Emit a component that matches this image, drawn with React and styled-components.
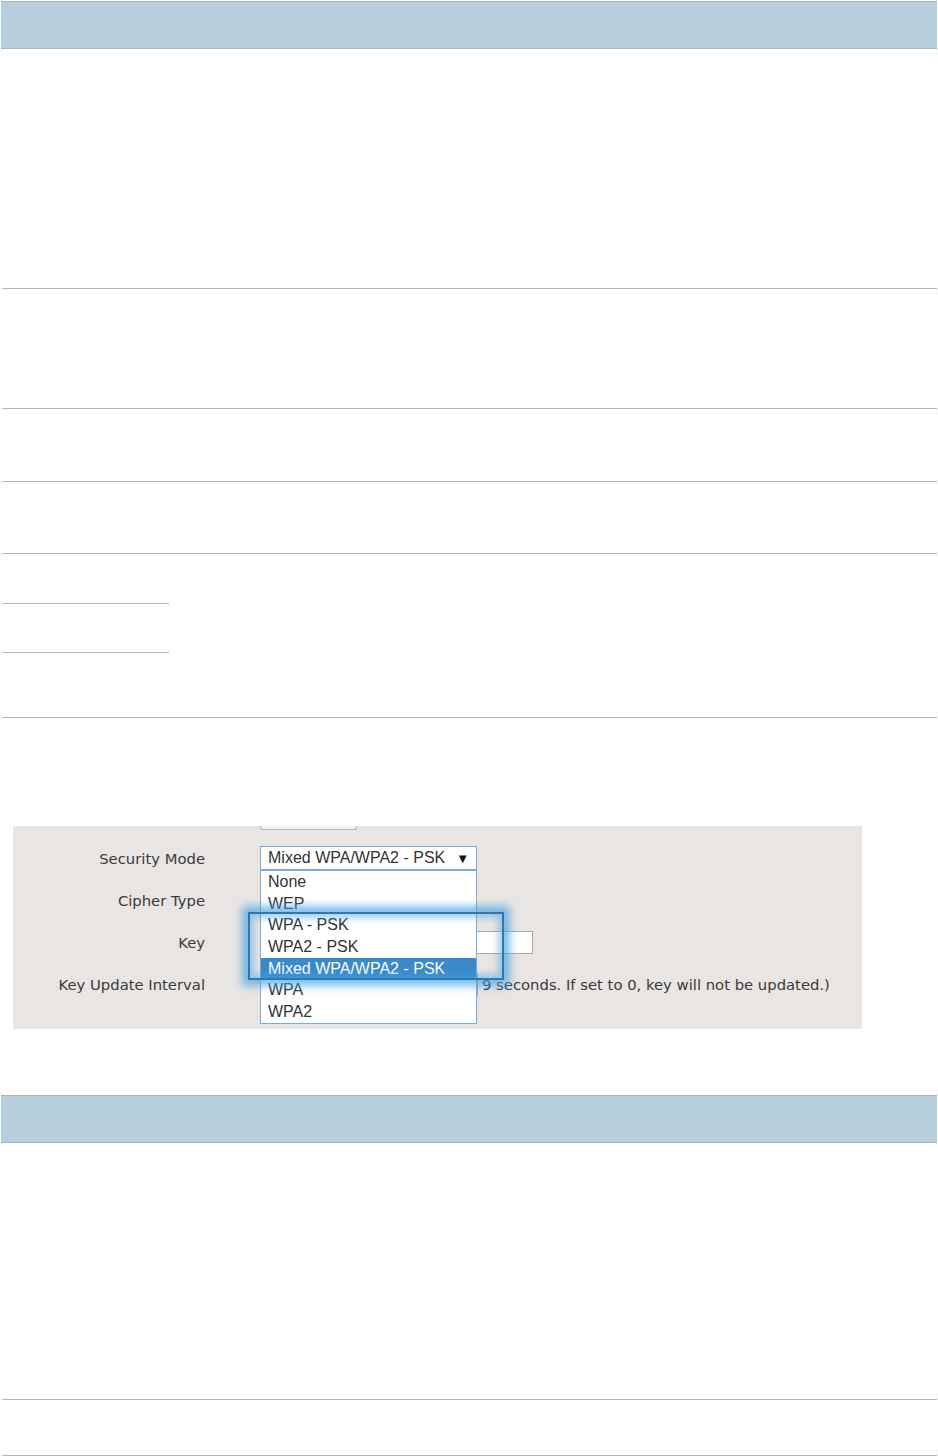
import React from "react";
import styled, { createGlobalStyle } from "styled-components";

const GlobalStyle = createGlobalStyle`
  html, body {
    margin: 0;
    padding: 0;
    background: #ffffff;
  }
  body {
    font-family: "Liberation Sans", Arial, sans-serif;
  }
`;

const Page = styled.div`
  width: 938px;
  padding-top: 1px;
  display: flex;
  flex-direction: column;
`;

const Table = styled.div`
  display: flex;
  flex-direction: column;
  padding: 0 1px 0 2px;
  margin-top: ${(p) => p.$top || 0}px;
`;

const HeaderBand = styled.div`
  height: 48px;
  box-sizing: border-box;
  margin-left: -1px;
  background: #b7cedd;
  border-top: 1px solid #acb3b8;
  border-bottom: 1px solid #acb3b8;
`;

const Row = styled.div`
  display: grid;
  grid-template-columns: 167px 1fr;
  height: ${(p) => p.$h}px;
  box-sizing: border-box;
  border-bottom: 1px solid #b4b4b4;
`;

const SubStack = styled.div`
  display: flex;
  flex-direction: column;
`;

const SubCell = styled.div`
  height: ${(p) => p.$h}px;
  box-sizing: border-box;
  border-bottom: ${(p) => (p.$line ? "1px solid #b4b4b4" : "none")};
`;

const Cell = styled.div``;

/* ---- embedded router screenshot ---- */

const Figure = styled.div`
  margin: 108px 0 0 13px;
  width: 849px;
  height: 203px;
  background: #e9e5e3;
  position: relative;
  font-family: "DejaVu Sans", Tahoma, Verdana, sans-serif;
  font-size: 14.8px;
  color: #3b3a3a;
`;

const Stub = styled.div`
  margin-left: 247px;
  width: 95px;
  height: 3px;
  border: 1px solid #b9b6b6;
  border-top: none;
  border-radius: 0 0 3px 3px;
  background: #f4f2f1;
  margin-bottom: 7px;
`;

const Form = styled.div`
  display: grid;
  grid-template-columns: 192px 1fr;
  column-gap: 55px;
  grid-auto-rows: 42px;
  align-items: center;
`;

const Label = styled.div`
  text-align: right;
  white-space: nowrap;
`;

const Control = styled.div`
  display: flex;
  align-items: center;
  position: relative;
`;

const Select = styled.div`
  position: relative;
  width: 217px;
  height: 24px;
  box-sizing: border-box;
  border: 1px solid #7fa9cf;
  background: #ffffff;
  display: flex;
  align-items: center;
  justify-content: space-between;
  padding: 0 7px 0 7px;
  font-family: "Liberation Sans", Arial, sans-serif;
  font-size: 16px;
  color: #333;
`;

const Arrow = styled.span`
  font-size: 13px;
  color: #111;
`;

const List = styled.div`
  position: absolute;
  top: 23px;
  left: -1px;
  width: 217px;
  box-sizing: border-box;
  border: 1px solid #7fa9cf;
  background: #ffffff;
  z-index: 2;
`;

const Option = styled.div`
  height: 21.7px;
  line-height: 21.7px;
  padding-left: 7px;
  font-family: "Liberation Sans", Arial, sans-serif;
  font-size: 16px;
  color: ${(p) => (p.$active ? "#ffffff" : "#333")};
  background: ${(p) => (p.$active ? "#3a8ac8" : "transparent")};
`;

const Input = styled.div`
  width: ${(p) => p.$w}px;
  height: 23px;
  box-sizing: border-box;
  border: 1px solid #a9a7a7;
  background: #ffffff;
  flex: none;
`;

const Hint = styled.span`
  margin-left: 4px;
  white-space: nowrap;
`;

const Highlight = styled.div`
  position: absolute;
  left: 235px;
  top: 86px;
  width: 256px;
  height: 68px;
  box-sizing: border-box;
  border: 2px solid #2b78b6;
  box-shadow: 0 0 8px 6px rgba(70, 162, 226, 0.7),
    inset 0 0 7px 4px rgba(70, 162, 226, 0.5);
  z-index: 3;
  pointer-events: none;
`;

const options = [
  "None",
  "WEP",
  "WPA - PSK",
  "WPA2 - PSK",
  "Mixed WPA/WPA2 - PSK",
  "WPA",
  "WPA2",
];

export default function App() {
  return (
    <Page>
      <GlobalStyle />
      <Table>
        <HeaderBand />
        <Row $h={240}>
          <Cell />
          <Cell />
        </Row>
        <Row $h={120}>
          <Cell />
          <Cell />
        </Row>
        <Row $h={73}>
          <Cell />
          <Cell />
        </Row>
        <Row $h={72}>
          <Cell />
          <Cell />
        </Row>
        <Row $h={164}>
          <SubStack>
            <SubCell $h={50} $line />
            <SubCell $h={49} $line />
            <SubCell $h={64} />
          </SubStack>
          <Cell />
        </Row>
      </Table>

      <Figure>
        <Stub />
        <Form>
          <Label>Security Mode</Label>
          <Control>
            <Select>
              Mixed WPA/WPA2 - PSK <Arrow>▼</Arrow>
              <List>
                {options.map((o) => (
                  <Option key={o} $active={o === "Mixed WPA/WPA2 - PSK"}>
                    {o}
                  </Option>
                ))}
              </List>
            </Select>
          </Control>

          <Label>Cipher Type</Label>
          <Control />

          <Label>Key</Label>
          <Control>
            <Input $w={273} />
          </Control>

          <Label>Key Update Interval</Label>
          <Control>
            <Input $w={218} />
            <Hint>9 seconds. If set to 0, key will not be updated.)</Hint>
          </Control>
        </Form>
        <Highlight />
      </Figure>

      <Table $top={66}>
        <HeaderBand />
        <Row $h={257}>
          <Cell />
          <Cell />
        </Row>
        <Row $h={56}>
          <Cell />
          <Cell />
        </Row>
      </Table>
    </Page>
  );
}
